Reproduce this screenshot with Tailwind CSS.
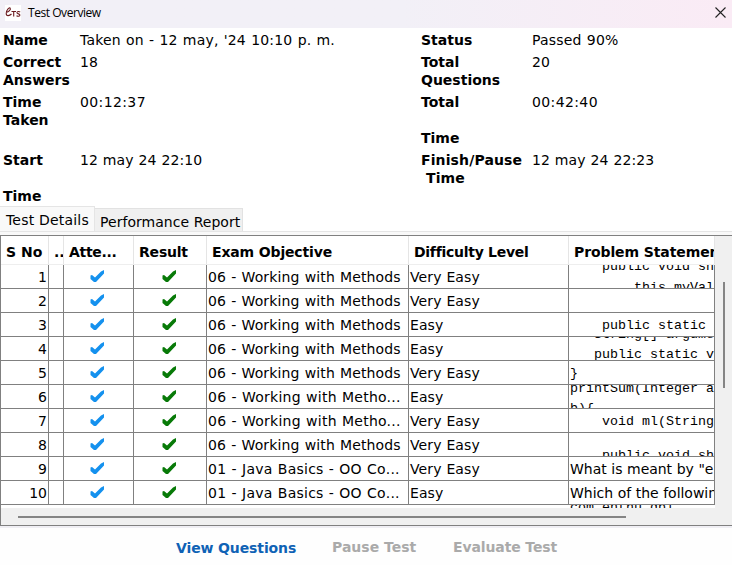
<!DOCTYPE html>
<html lang="en">
<head>
<meta charset="utf-8">
<title>Test Overview</title>
<script src="https://cdn.jsdelivr.net/npm/@tailwindcss/browser@4"></script>
</head>
<body class="h-[565px] w-[732px] overflow-hidden bg-white font-['DejaVu_Sans',sans-serif] text-[14px] leading-[18px] text-black">
<div class="flex h-[565px] flex-col overflow-hidden">
<header class="flex h-7 shrink-0 items-center bg-linear-to-r from-[#f2f0f7] from-55% to-[#faebf5] pl-[5px] pr-[6px]"><svg class="mb-[3px] h-4 w-4 bg-white" viewBox="0 0 16 16" fill="none" stroke="#6b1a20" stroke-width="1.1"><path d="M1 7.5C4 7 6 4.5 5.2 3.2C4.3 2 1.2 5 1.2 8.4C1.2 11.5 4.4 11 6.5 9"/><path d="M6.5 6.5H11M8.7 6.5V11.5M15.2 6.9C13 6 11.7 7 12 8C12.5 9 14.9 8.8 14.9 10C14.9 11.6 12.7 11.4 11.5 10.8"/></svg><h1 class="mb-[2px] ml-[7px] font-['Open_Sans',sans-serif] text-[12px] tracking-[-0.45px]">Test Overview</h1><svg class="mb-1 ml-auto h-[11px] w-[11px]" viewBox="0 0 11 11" stroke="#222" stroke-width="1.1"><path d="M.5 .5L10.5 10.5M10.5 .5L.5 10.5"/></svg></header>
<section class="grid shrink-0 grid-cols-[77px_341px_111px_1fr] grid-rows-[18px_36px_54px_54px] gap-y-1 whitespace-pre pl-[3px] pt-[3px]"><b class="tracking-[-0.2px]">Name</b><span class="tracking-[0.2px] [word-spacing:0.5px]">Taken on - 12 may, '24 10:10 p. m.</span><b>Status</b><span class="tracking-[0.2px] [word-spacing:0.5px]">Passed 90%</span><b>Correct
Answers</b><span>18</span><b>Total
Questions</b><span>20</span><b>Time
Taken</b><span class="tracking-[0.38px]">00:12:37</span><b>Total

Time</b><span class="tracking-[0.38px]">00:42:40</span><b>Start

Time</b><span class="tracking-[0.1px] [word-spacing:0.3px]">12 may 24 22:10</span><b class="tracking-[0.12px]">Finish/Pause
 Time</b><span class="tracking-[0.1px] [word-spacing:0.3px]">12 may 24 22:23</span></section>
<nav class="mt-[2px] flex h-[25px] shrink-0 items-end border-b border-[#e5e5e5]"><div class="h-[25px] w-[95px] border-r border-t border-[#e5e5e5] bg-[#f9f9f9] pl-[6px] pt-[4px] tracking-[0.2px]">Test Details</div><div class="h-[23px] w-[148px] border-r border-t border-[#e2e2e2] bg-[#f0f0f0] pl-[5px] pt-[4px] tracking-[0.04px]">Performance Report</div></nav>
<div class="h-[3px] shrink-0 bg-[#f9f9f9]"></div>
<main class="flex h-[291px] shrink-0 flex-col border-y border-l border-[#808080] bg-[#f0f0f0]"><div class="flex h-[272px]"><div class="w-[714px] shrink-0 overflow-hidden bg-white"><div class="grid h-[29px] grid-cols-[48px_15px_70px_73px_202px_160px_146px] whitespace-pre border-b border-[#eee] font-bold leading-[32px] *:overflow-hidden *:border-r *:border-[#e5e5e5] last:*:border-r-0"><span class="pl-[5px]">S No</span><span class="pl-[5px]">..</span><span class="pl-[5px] tracking-[-0.3px]">Atte...</span><span class="pl-[5px] tracking-[-0.2px]">Result</span><span class="pl-[5px] tracking-[-0.15px]">Exam Objective</span><span class="pl-[5px] tracking-[-0.28px]">Difficulty Level</span><span class="pl-[5px] tracking-[-0.1px]">Problem Statement</span></div><div id="rows"></div></div><div class="flex w-[17px] justify-center pt-[46px]"><div class="h-[106px] w-[2px] bg-[#858585]"></div></div></div><div class="flex h-[17px] pl-[17px] pt-[8px]"><div class="h-[2px] w-[608px] bg-[#858585]"></div></div></main>
<footer class="flex h-[39px] shrink-0 border-t-2 border-[#f0eff4] bg-[#fefefe] pt-[10px] font-bold tracking-[-0.12px]"><span class="ml-[176px] w-[156px] pt-px text-[#0f62b5]">View Questions</span><span class="w-[121px] tracking-normal text-[#aaa]">Pause Test</span><span class="text-[#aaa]">Evaluate Test</span></footer>
</div>
<script>
const M = '06 - Working with Methods', J = '01 - Java Basics - OO Co...';
const rows = [
 [M, 'Very Easy', [['    public void show', -10], ['        this.myValue', 11]]],
 [M, 'Very Easy', []],
 [M, 'Easy', [['    public static void', 1]]],
 [M, 'Easy', [['   String[] arguments', -14], ['   public static void', 6]]],
 [M, 'Very Easy', [['}', 1]]],
 ['06 - Working with Metho...', 'Easy', [['printSum(Integer a', -8], ['b){', 12]]],
 ['06 - Working with Metho...', 'Very Easy', [['    void ml(String', 1]]],
 [M, 'Very Easy', [['    public void show', 11]]],
 [J, 'Very Easy', 'What is meant by "encap'],
 [J, 'Easy', 'Which of the following'],
 ['', '', [['com.enthu.qbl', -9]]]
];
const blueTick = `<svg class="ml-[26px] mt-[5px] h-[13px] w-[14px]" viewBox="0 0 14 13"><path fill="#1491ee" d="M.5 5.5L2 5L5 7.5L11 1.5L14 0V3.5L6 12H4L.5 9Z"/></svg>`;
const greenTick = `<svg class="ml-[28px] mt-[5px] h-[13px] w-[14px]" viewBox="0 0 14 13"><path fill="#087a08" d="M.5 5.5L2 5L5 7.5L11 1.5L14 0V3.5L6 12H4L.5 9Z"/></svg>`;
document.getElementById('rows').innerHTML = rows.map((r, i) => {
  const last = i === 10;
  const spacing = r[0] === M ? 'tracking-[0.14px]' : 'tracking-[0.25px]';
  const problem = typeof r[2] === 'string' ? r[2] : r[2].map(([t, y]) => `<span class="absolute left-px font-['Liberation_Mono',monospace] text-[13.33px] tracking-normal [word-spacing:0px]" style="top:${y}px">${t}</span>`).join('');
  return `<div class="grid h-6 grid-cols-[48px_15px_70px_73px_202px_160px_146px] whitespace-pre border-b border-[#808080] leading-[24px] *:relative *:overflow-hidden *:border-r *:border-[#808080] last:*:border-r-0"><span class="pr-[1px] text-right">${last ? '' : i + 1}</span><span></span><span>${last ? '' : blueTick}</span><span>${last ? '' : greenTick}</span><span class="pl-px ${spacing} [word-spacing:0.5px]">${r[0]}</span><span class="pl-px tracking-[0.1px] [word-spacing:0.3px]">${r[1]}</span><span class="pl-px tracking-[-0.03px] [word-spacing:0.2px]">${problem}</span></div>`;
}).join('');
</script>
</body>
</html>
